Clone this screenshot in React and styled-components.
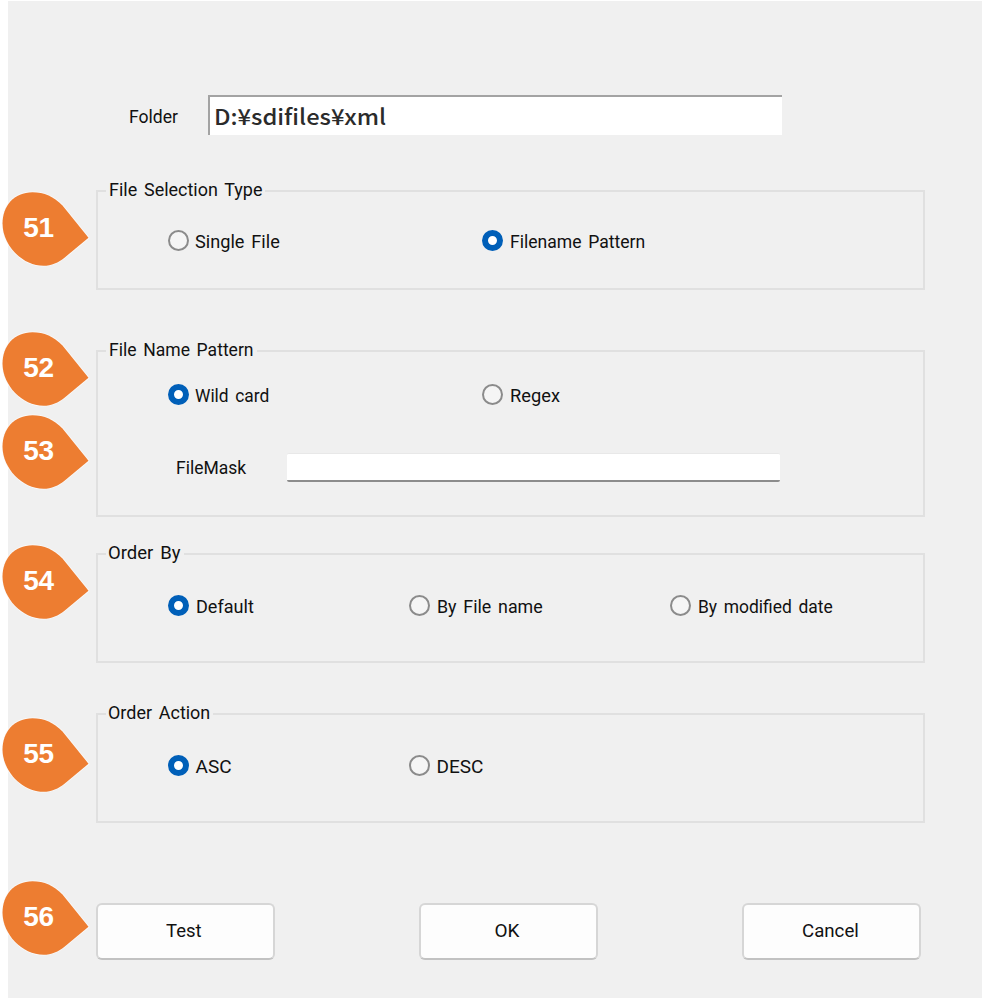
import React, { useLayoutEffect, useRef, useState } from "react";
import styled, { createGlobalStyle } from "styled-components";

const GlobalStyle = createGlobalStyle`
  * { box-sizing: border-box; }
  body { margin: 0; background: #fff; overflow: hidden; }
`;

const Page = styled.main`
  position: relative;
  width: 982px;
  height: 998px;
  padding: 1px 0 0 8px;
  background: #fff;
  font-family: Roboto, "Noto Sans CJK JP", sans-serif;
  font-size: 19px;
  line-height: 20px;
  color: #111;
`;

const Panel = styled.form`
  display: flex;
  flex-direction: column;
  height: 997px;
  padding: 94px 58px 0 88px;
  background: #f0f0f0;
`;

const FitBox = styled.span`
  display: inline-block;
  flex: none;
  width: ${(p) => p.$width}px;
  white-space: pre;
`;

const FitInner = styled.span`
  display: inline-block;
  transform-origin: 0 50%;
  word-spacing: 2.5px;
`;

/* Label condensed or widened to fill a fixed advance width. */
function FitText({ width, children }) {
  const ref = useRef(null);
  const [scale, setScale] = useState(1);
  useLayoutEffect(() => {
    setScale(width / ref.current.offsetWidth);
  }, [width, children]);
  return (
    <FitBox $width={width}>
      <FitInner ref={ref} style={{ transform: `scaleX(${scale})` }}>
        {children}
      </FitInner>
    </FitBox>
  );
}

const FolderRow = styled.div`
  display: flex;
  align-items: center;
  height: 40px;
  padding-left: 32px;
`;

const FolderLabel = styled.label`
  width: 80px;
  padding: 4px 0 0 1px;
`;

const FolderField = styled.div`
  display: flex;
  align-items: center;
  width: 574px;
  height: 40px;
  padding: 0 0 3px 4px;
  border-top: 2px solid #a3a3a3;
  border-left: 2px solid #a3a3a3;
  background: #fff;
  color: #2b2b2b;
  font-family: "Noto Sans CJK JP", sans-serif;
  font-size: 22px;
  font-weight: 500;
  line-height: 34px;
`;

const Group = styled.section`
  width: 829px;
  height: ${(p) => p.$height}px;
  margin-top: ${(p) => p.$gap}px;
  border: 2px solid #e0e0e0;
`;

const Legend = styled.h2`
  display: flex;
  width: max-content;
  height: 20px;
  margin: -12px 0 0 8px;
  padding: 0 3px 0 ${(p) => p.$pad || 3}px;
  background: #f0f0f0;
  font: inherit;
`;

const Options = styled.div`
  display: grid;
  grid-template-columns: ${(p) => p.$columns};
  margin-top: ${(p) => p.$top}px;
  padding-left: 69.5px;
`;

const Option = styled.label`
  display: flex;
  align-items: center;
  height: 21px;
  gap: ${(p) => p.$gap || 6}px;

  ${FitBox} {
    margin-top: 2px;
  }
`;

const Radio = styled.span`
  flex: none;
  width: 21px;
  height: 21px;
  border: ${(p) => (p.$on ? "6.5px solid #005fb8" : "2px solid #8b8b8b")};
  border-radius: 50%;
  background: ${(p) => (p.$on ? "#fff" : "#f5f5f5")};
`;

const MaskRow = styled.div`
  display: flex;
  align-items: center;
  height: 29px;
  margin-top: 48px;
  padding-left: 78px;
`;

const MaskLabel = styled.label`
  width: 111px;
`;

const MaskField = styled.div`
  width: 493px;
  height: 29px;
  border-bottom: 2px solid #8c8c8c;
  border-top: 1px solid #e8e8e8;
  border-radius: 2px;
  background: #fff;
`;

const Buttons = styled.div`
  display: flex;
  gap: 144px;
  margin-top: 80px;
`;

const Button = styled.button`
  display: flex;
  align-items: center;
  justify-content: center;
  width: 179px;
  height: 57px;
  padding: 0 3px 2px 0;
  border: 2px solid #d6d6d6;
  border-bottom-color: #c2c2c2;
  border-radius: 6px;
  background: #fdfdfd;
  color: inherit;
  font: inherit;
`;

const Marker = styled.div`
  position: absolute;
  left: 1px;
  top: ${(p) => p.$top}px;
  width: 90px;
  height: 76px;
`;

const Drop = styled.svg`
  display: block;
`;

const MarkerNumber = styled.span`
  position: absolute;
  left: 0;
  top: 21px;
  width: 75px;
  text-align: center;
  font: bold 28px/32px "Liberation Sans", Arial, sans-serif;
  letter-spacing: -0.3px;
  color: #fff;
`;

function Choice({ on, width, gap, children }) {
  return (
    <Option $gap={gap}>
      <Radio $on={on} />
      <FitText width={width}>{children}</FitText>
    </Option>
  );
}

const markers = [
  [51, 191],
  [52, 331],
  [53, 414],
  [54, 544],
  [55, 717],
  [56, 880],
];

export default function App() {
  return (
    <Page>
      <GlobalStyle />
      <Panel>
        <FolderRow>
          <FolderLabel><FitText width={49}>Folder</FitText></FolderLabel>
          <FolderField><FitText width={172}>D:¥sdifiles¥xml</FitText></FolderField>
        </FolderRow>

        <Group $height={100} $gap={55}>
          <Legend><FitText width={153}>File Selection Type</FitText></Legend>
          <Options $columns="314px 1fr" $top={30}>
            <Choice width={85}>Single File</Choice>
            <Choice on width={135} gap={7}>Filename Pattern</Choice>
          </Options>
        </Group>

        <Group $height={167} $gap={60}>
          <Legend><FitText width={145}>File Name Pattern</FitText></Legend>
          <Options $columns="314px 1fr" $top={24}>
            <Choice on width={74}>Wild card</Choice>
            <Choice width={50} gap={7}>Regex</Choice>
          </Options>
          <MaskRow>
            <MaskLabel><FitText width={70}>FileMask</FitText></MaskLabel>
            <MaskField />
          </MaskRow>
        </Group>

        <Group $height={110} $gap={36}>
          <Legend $pad={2}><FitText width={73}>Order By</FitText></Legend>
          <Options $columns="241px 261px 1fr" $top={32}>
            <Choice on width={58} gap={7}>Default</Choice>
            <Choice width={106} gap={7}>By File name</Choice>
            <Choice width={135} gap={7}>By modified date</Choice>
          </Options>
        </Group>

        <Group $height={110} $gap={50}>
          <Legend $pad={2}><FitText width={102}>Order Action</FitText></Legend>
          <Options $columns="241px 1fr" $top={32}>
            <Choice on width={36} gap={7}>ASC</Choice>
            <Choice width={47} gap={7}>DESC</Choice>
          </Options>
        </Group>

        <Buttons>
          <Button type="button"><FitText width={36}>Test</FitText></Button>
          <Button type="button"><FitText width={25}>OK</FitText></Button>
          <Button type="button"><FitText width={57}>Cancel</FitText></Button>
        </Buttons>
      </Panel>

      {markers.map(([n, top]) => (
        <Marker key={n} $top={top}>
          <Drop width="90" height="76" viewBox="0 0 90 76">
            <path
              d="M87.5 46.8 L61.5 14.5 C53 5.5 43 1.2 31.5 1.2 C13 1.2 1.5 15 1.5 32.5 C1.5 54 21 74.8 42.5 74.8 C50.5 74.8 57.5 71.5 63.5 66.7 Z"
              fill="#ed7d31"
              stroke="#fbfbfb"
              strokeWidth="1.6"
              paintOrder="stroke"
            />
          </Drop>
          <MarkerNumber>{n}</MarkerNumber>
        </Marker>
      ))}
    </Page>
  );
}
